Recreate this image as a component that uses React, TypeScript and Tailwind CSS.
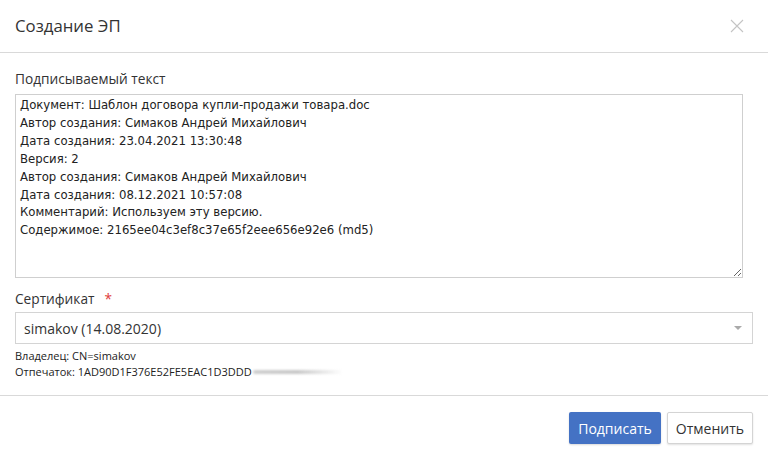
import { useState } from "react";

const SIGN_TEXT = [
  "Документ: Шаблон договора купли-продажи товара.doc",
  "Автор создания: Симаков Андрей Михайлович",
  "Дата создания: 23.04.2021 13:30:48",
  "Версия: 2",
  "Автор создания: Симаков Андрей Михайлович",
  "Дата создания: 08.12.2021 10:57:08",
  "Комментарий: Используем эту версию.",
  "Содержимое: 2165ee04c3ef8c37e65f2eee656e92e6 (md5)",
].join("\n");

export default function App() {
  const [text, setText] = useState(SIGN_TEXT);

  return (
    <div className="h-[460px] w-[768px] bg-white text-[#333] font-['Open_Sans',sans-serif]">
      {/* Шапка */}
      <div className="flex h-[53px] items-center justify-between border-b border-[#d9d9d9] pl-[15px] pr-[24px]">
        <h2 className="text-[16.8px] leading-none">Создание ЭП</h2>
        <button className="text-[#c4c4c4]" aria-label="Закрыть">
          <svg width="14" height="14" viewBox="0 0 14 14" stroke="currentColor" strokeWidth="1.1">
            <path d="M1 1L13 13M13 1L1 13" />
          </svg>
        </button>
      </div>

      {/* Тело */}
      <div className="flex h-[343px] flex-col border-b border-[#d9d9d9] pl-[15px] pr-[15px] pt-[16px]">
        <label className="text-[13.7px] leading-[20px]">Подписываемый текст</label>
        <textarea
          value={text}
          onChange={(e) => setText(e.target.value)}
          className="mt-[5px] h-[184px] w-[728px] resize border border-[#cfcfcf] px-[4px] pt-[1px] text-[13px] leading-[17.9px] text-[#222] outline-none font-['DejaVu_Sans_Condensed','DejaVu_Sans',sans-serif]"
        />

        <div className="mt-[12px] flex items-center gap-[10px] text-[13.7px] leading-[18px]">
          <span>Сертификат</span>
          <span className="text-[#e03a3a]">*</span>
        </div>

        <div className="mt-[4px] flex h-[32px] w-[738px] items-center justify-between border border-[#d4d4d4] pl-[8px] pr-[10px]">
          <span className="text-[14px]">simakov (14.08.2020)</span>
          <span className="h-0 w-0 border-x-[4px] border-t-[4px] border-x-transparent border-t-[#aaa]" />
        </div>

        <div className="mt-[4px] text-[11px] leading-[16px] text-[#222]">
          <div>Владелец: CN=simakov</div>
          <div className="flex items-center">
            <span>Отпечаток: 1AD90D1F376E52FE5EAC1D3DDD</span>
            <span className="ml-[1px] h-[4px] w-[90px] rounded-full bg-gradient-to-r from-[#cfcfcf] via-[#c9c9c9] to-transparent blur-[1px]" />
          </div>
        </div>
      </div>

      {/* Подвал */}
      <div className="flex justify-end gap-[6px] pr-[15px] pt-[16px]">
        <button className="h-[32px] rounded-[2px] bg-[#4472c4] px-[9px] text-[14px] text-white shadow-[0_1px_2px_rgba(0,0,0,0.15)]">
          Подписать
        </button>
        <button className="h-[32px] rounded-[2px] border border-[#d4d4d4] bg-white px-[8px] text-[14px] text-[#333] shadow-[0_1px_2px_rgba(0,0,0,0.12)]">
          Отменить
        </button>
      </div>
    </div>
  );
}
